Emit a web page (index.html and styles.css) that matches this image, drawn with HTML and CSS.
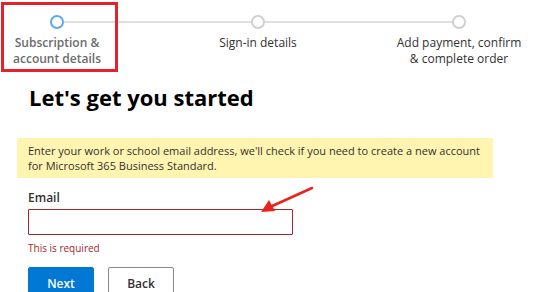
FILE: index.html
```html
<!DOCTYPE html>
<html lang="en">
<head>
    <meta charset="UTF-8">
    <meta name="viewport" content="width=device-width, initial-scale=1.0">
    <title>Let's get you started</title>
    <link rel="stylesheet" href="styles.css">
</head>
<body>
    <div class="stepper">
        <div class="track"></div>
        <div class="step current">
            <span class="dot"></span>
            <div class="step-label">Subscription &amp;<br>account details</div>
            <div class="highlight"></div>
        </div>
        <div class="step">
            <span class="dot"></span>
            <div class="step-label">Sign-in details</div>
        </div>
        <div class="step">
            <span class="dot"></span>
            <div class="step-label">Add payment, confirm<br>&amp; complete order</div>
        </div>
    </div>

    <div class="content">
        <h1>Let's get you started</h1>

        <div class="notice">
            Enter your work or school email address, we'll check if you need to create a new account<br>
            for Microsoft 365 Business Standard.
        </div>

        <!-- Formulário de email -->
        <form class="email-form" onsubmit="return false;">
            <label for="email">Email</label>
            <div class="field">
                <input type="text" id="email" name="email">
                <svg class="arrow" width="60" height="30" viewBox="0 0 60 30">
                    <line x1="54" y1="2" x2="12" y2="21" stroke="#e8231e" stroke-width="2.5" stroke-linecap="round"/>
                    <polygon points="3,26 11,14 17,25" fill="#e8231e"/>
                </svg>
            </div>
            <div class="error">This is required</div>
            <div class="buttons">
                <button type="submit" class="btn-primary">Next</button>
                <button type="button" class="btn-default">Back</button>
            </div>
        </form>
    </div>
</body>
</html>
```

FILE: styles.css
```css
body {
    margin: 0;
    padding: 0;
    font-family: "Open Sans", Arial, sans-serif;
    color: #323130;
    background: #fff;
    overflow: hidden;
}
.stepper {
    position: relative;
    display: grid;
    grid-template-columns: 114px 288px 114px;
    padding-top: 15px;
}
.track {
    position: absolute;
    top: 21px;
    left: 64px;
    width: 390px;
    height: 2px;
    background-color: #e1dfdd;
}
.step {
    position: relative;
    display: flex;
    flex-direction: column;
    align-items: center;
}
.dot {
    position: relative;
    width: 10px;
    height: 10px;
    border: 2px solid #d2d0ce;
    border-radius: 50%;
    background: #fff;
}
.step.current .dot {
    border-color: #5ea8ec;
}
.step-label {
    margin-top: 6px;
    font-size: 12px;
    line-height: 16px;
    text-align: center;
    white-space: nowrap;
    color: #323130;
}
.step.current .step-label {
    font-weight: 600;
    color: #6b6b6b;
}
/* moldura vermelha de destaque */
.highlight {
    position: absolute;
    top: -13px;
    left: 1px;
    width: 111px;
    height: 64px;
    border: 3px solid #e8202a;
}
.content {
    padding-left: 17px;
}
h1 {
    margin: 14px 0 0 12px;
    font-size: 22px;
    line-height: 32px;
    font-weight: 700;
    color: #000;
}
.notice {
    width: 465px;
    margin-top: 25px;
    padding: 5px 0 5px 11px;
    background-color: #fff4b0;
    font-size: 11px;
    line-height: 15px;
    color: #323130;
}
.email-form {
    padding-left: 11px;
    margin-top: 12px;
}
label {
    display: block;
    font-size: 12px;
    font-weight: 600;
    line-height: 16px;
}
.field {
    position: relative;
    margin-top: 3px;
}
input[type="text"] {
    display: block;
    box-sizing: border-box;
    width: 265px;
    height: 26px;
    margin: 0;
    border: 1px solid #a4262c;
    border-radius: 1px;
}
.arrow {
    position: absolute;
    left: 230px;
    top: -23px;
}
.error {
    margin-top: 6px;
    font-size: 10px;
    line-height: 14px;
    color: #a4262c;
}
.buttons {
    display: flex;
    gap: 14px;
    margin-top: 12px;
}
button {
    box-sizing: border-box;
    width: 66px;
    height: 32px;
    font-family: inherit;
    font-size: 12px;
    font-weight: 600;
    border-radius: 2px;
    cursor: pointer;
}
.btn-primary {
    background-color: #0078d4;
    border: 1px solid #0078d4;
    color: #fff;
}
.btn-default {
    background-color: #fff;
    border: 1px solid #8a8886;
    color: #323130;
}
```
